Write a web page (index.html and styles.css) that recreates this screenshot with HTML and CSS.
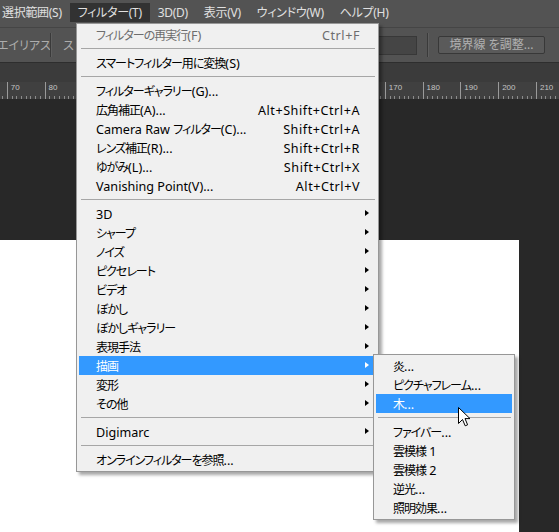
FILE: index.html
```html
<!DOCTYPE html>
<html lang="ja">
<head>
<meta charset="UTF-8" />
<meta name="viewport" content="width=device-width, initial-scale=1" />
<title>フィルター メニュー</title>
<link rel="stylesheet" href="styles.css">
</head>
<body>

<div class="app">
  <div class="menubar">
    <span class="menubar-item">選択範囲(S)</span>
    <span class="menubar-item active">フィルター(T)</span>
    <span class="menubar-item">3D(D)</span>
    <span class="menubar-item">表示(V)</span>
    <span class="menubar-item">ウィンドウ(W)</span>
    <span class="menubar-item">ヘルプ(H)</span>
  </div>

  <div class="options">
    <span class="opt-label first">エイリアス</span>
    <span class="opt-sep"></span>
    <span class="opt-label">ス</span>
    <div class="opt-right">
      <span class="opt-input"></span>
      <span class="opt-sep"></span>
      <button class="opt-button">境界線 を調整...</button>
    </div>
  </div>

  <div class="tabs"></div>

  <!-- labels under the open menu are left blank -->
  <div class="ruler">
    <span class="tick"></span>
    <span class="tick">70</span>
    <span class="tick">80</span>
    <span class="tick"></span>
    <span class="tick"></span>
    <span class="tick"></span>
    <span class="tick"></span>
    <span class="tick"></span>
    <span class="tick"></span>
    <span class="tick"></span>
    <span class="tick"></span>
    <span class="tick">170</span>
    <span class="tick">180</span>
    <span class="tick">190</span>
    <span class="tick">200</span>
    <span class="tick">210</span>
    <span class="tick"></span>
  </div>

  <div class="workspace">
    <div class="doc"></div>
  </div>
</div>

<!-- フィルターメニュー -->
<div class="menu menu-filter">
  <div class="item disabled"><span class="label"><span class="ja">フィルターの再実行</span>(F)</span><span class="key">Ctrl+F</span></div>
  <div class="sep"></div>
  <div class="item"><span class="label"><span class="ja">スマートフィルター用に変換</span>(S)</span></div>
  <div class="sep"></div>
  <div class="item"><span class="label"><span class="ja">フィルターギャラリー</span>(G)...</span></div>
  <div class="item"><span class="label"><span class="ja">広角補正</span>(A)...</span><span class="key">Alt+Shift+Ctrl+A</span></div>
  <div class="item"><span class="label">Camera Raw <span class="ja">フィルター</span>(C)...</span><span class="key">Shift+Ctrl+A</span></div>
  <div class="item"><span class="label"><span class="ja">レンズ補正</span>(R)...</span><span class="key">Shift+Ctrl+R</span></div>
  <div class="item"><span class="label"><span class="ja">ゆがみ</span>(L)...</span><span class="key">Shift+Ctrl+X</span></div>
  <div class="item"><span class="label">Vanishing Point(V)...</span><span class="key">Alt+Ctrl+V</span></div>
  <div class="sep"></div>
  <div class="item sub"><span class="label">3D</span></div>
  <div class="item sub"><span class="label ja">シャープ</span></div>
  <div class="item sub"><span class="label ja">ノイズ</span></div>
  <div class="item sub"><span class="label ja">ピクセレート</span></div>
  <div class="item sub"><span class="label ja">ビデオ</span></div>
  <div class="item sub"><span class="label ja">ぼかし</span></div>
  <div class="item sub"><span class="label ja">ぼかしギャラリー</span></div>
  <div class="item sub"><span class="label ja">表現手法</span></div>
  <div class="item sub hover"><span class="label ja">描画</span></div>
  <div class="item sub"><span class="label ja">変形</span></div>
  <div class="item sub"><span class="label ja">その他</span></div>
  <div class="sep"></div>
  <div class="item sub"><span class="label">Digimarc</span></div>
  <div class="sep"></div>
  <div class="item"><span class="label"><span class="ja">オンラインフィルターを参照</span>...</span></div>
</div>

<!-- 描画サブメニュー -->
<div class="menu menu-draw">
  <div class="item"><span class="label"><span class="ja">炎</span>...</span></div>
  <div class="item"><span class="label"><span class="ja">ピクチャフレーム</span>...</span></div>
  <div class="item hover"><span class="label"><span class="ja">木</span>...</span></div>
  <div class="sep"></div>
  <div class="item"><span class="label"><span class="ja">ファイバー</span>...</span></div>
  <div class="item"><span class="label"><span class="ja">雲模様</span> 1</span></div>
  <div class="item"><span class="label"><span class="ja">雲模様</span> 2</span></div>
  <div class="item"><span class="label"><span class="ja">逆光</span>...</span></div>
  <div class="item"><span class="label"><span class="ja">照明効果</span>...</span></div>
</div>

<svg class="cursor" width="13" height="20" viewBox="0 0 13 20">
  <path d="M0.5 0.5 L0.5 16.5 L4.5 12.5 L7.2 18.8 L9.6 17.8 L7 11.6 L12 11.6 Z" fill="#fff" stroke="#000" stroke-width="1" stroke-linejoin="miter"/>
</svg>

</body>
</html>
```

FILE: styles.css
```css
* {
  box-sizing: border-box;
}
html, body {
  margin: 0;
}
body {
  position: relative;
  width: 559px;
  height: 532px;
  overflow: hidden;
  background: #282828;
  font-family: "Noto Sans", "Noto Sans CJK JP", sans-serif;
  font-size: 12px;
  font-feature-settings: "palt" 1;
}
.app {
  display: flex;
  flex-direction: column;
  height: 532px;
}

/* menu bar */
.menubar {
  display: flex;
  align-items: flex-start;
  height: 27px;
  padding-top: 3px;
  background: #535353;
  color: #e0e0e0;
}
.menubar-item {
  height: 19px;
  line-height: 19px;
  padding: 0 8px;
  letter-spacing: -0.3px;
  white-space: nowrap;
}
.menubar-item:first-child {
  padding-left: 2px;
}
.menubar-item.active {
  background: #323232;
}

/* options bar */
.options {
  display: flex;
  align-items: center;
  height: 36px;
  background: #535353;
  border-top: 1px solid #454545;
  border-bottom: 1px solid #2e2e2e;
  color: #acacac;
  white-space: nowrap;
}
.opt-label.first {
  width: 53px;
  margin-left: -3px;
  overflow: hidden;
}
.opt-sep {
  width: 1px;
  height: 24px;
  margin: 0 12px 0 0;
  background: #3a3a3a;
  box-shadow: 1px 0 #5e5e5e;
}
.opt-right {
  display: flex;
  align-items: center;
  margin-left: auto;
  padding-right: 14px;
}
.opt-right .opt-sep {
  margin: 0 10px;
}
.opt-input {
  width: 100px;
  height: 19px;
  background: #454545;
  border: 1px solid #383838;
}
.opt-button {
  width: 107px;
  height: 18px;
  padding: 0;
  background: #5a5a5a;
  border: 1px solid #383838;
  border-radius: 2px;
  color: #b0b0b0;
  font: inherit;
  line-height: 16px;
}

.tabs {
  height: 19px;
  background: #3b3b3b;
}

/* ruler */
.ruler {
  display: flex;
  height: 17px;
  overflow: hidden;
  background-color: #404040;
  background-image: repeating-linear-gradient(90deg, #8c8c8c 0 1px, transparent 1px 4.725px);
  background-size: calc(100% + 40px) 3px;
  background-position: -31px 100%;
  background-repeat: no-repeat;
}
.tick {
  flex: 0 0 37.8px;
  padding: 1px 0 0 3px;
  border-left: 1px solid #9a9a9a;
  color: #c4c4c4;
  font-family: "Liberation Sans", sans-serif;
  font-size: 8px;
  line-height: 10px;
}
.tick:first-child {
  margin-left: -31px;
}

.workspace {
  flex: 1;
  padding-top: 141px;
  background: #282828;
}
.doc {
  width: 519px;
  height: 100%;
  background: #fff;
}

/* dropdown menus */
.menu {
  position: absolute;
  padding: 1px 0 2px;
  background: #f0f0f0;
  border: 1px solid #979797;
  box-shadow: 3px 3px 3px rgba(0, 0, 0, 0.35);
  color: #000;
}
.menu-filter {
  left: 76px;
  top: 23px;
  width: 303px;
}
.menu-draw {
  left: 373px;
  top: 354px;
  width: 142px;
}
.item {
  position: relative;
  display: flex;
  height: 19px;
  line-height: 17px;
  margin: 0 2px;
  padding: 2px 16px 0 17px;
  font-size: 12.6px;
  white-space: nowrap;
}
.item .label {
  flex: 1;
}
.item .ja {
  font-size: 12px;
  letter-spacing: -1px;
}
.item .key {
  letter-spacing: 0.55px;
}
.item.disabled {
  color: #6d6d6d;
}
.item.hover {
  background: #3399ff;
  color: #fff;
}
.item.sub::after {
  content: "";
  position: absolute;
  right: 7px;
  top: 6px;
  border-left: 4px solid #000;
  border-top: 3.5px solid transparent;
  border-bottom: 3.5px solid transparent;
}
.item.sub.hover::after {
  border-left-color: #fff;
}
.sep {
  height: 1px;
  margin: 4px 3px 4px 4px;
  background: #a6a6a6;
}

.cursor {
  position: absolute;
  left: 458px;
  top: 407px;
}
```
